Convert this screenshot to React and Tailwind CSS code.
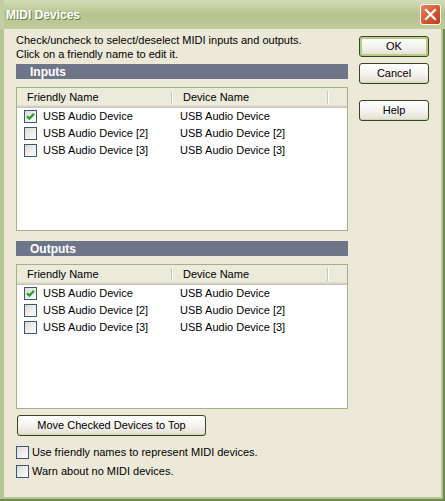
import React, { useState } from 'react';

const inputs = [
  { friendly: 'USB Audio Device', device: 'USB Audio Device', checked: true },
  { friendly: 'USB Audio Device [2]', device: 'USB Audio Device [2]', checked: false },
  { friendly: 'USB Audio Device [3]', device: 'USB Audio Device [3]', checked: false },
];

function CheckBox({ checked, onChange }) {
  return (
    <button
      onClick={onChange}
      className="w-[13px] h-[13px] shrink-0 border border-[#3c5878] bg-linear-to-br from-[#dcdad3] to-white flex items-center justify-center p-0"
    >
      {checked && (
        <svg width="9" height="9" viewBox="0 0 9 9">
          <path d="M1 4.2 L3.4 6.6 L8 1.8" fill="none" stroke="#21a121" strokeWidth="2.2" />
        </svg>
      )}
    </button>
  );
}

function XpButton({ children, isDefault, className = '' }) {
  return (
    <button
      className={`h-[21px] rounded-[3px] border border-[#36471f] bg-linear-to-b from-white via-[#f4f3ee] to-[#e3e0d2] text-[11px] text-black ${
        isDefault ? 'shadow-[inset_0_0_0_2px_#b4cc86]' : 'shadow-[inset_0_-1px_0_#d6d0bd]'
      } ${className}`}
    >
      {children}
    </button>
  );
}

function SectionBar({ label }) {
  return (
    <div className="h-[15px] bg-[#6f7588] flex items-center pl-[14px] text-[12px] font-bold text-white">
      {label}
    </div>
  );
}

function DeviceList({ rows, height }) {
  const [items, setItems] = useState(rows);
  return (
    <div className={`${height} border border-[#a4b08a] bg-white`}>
      <div className="flex items-center h-[20px] bg-[#ebeadb] shadow-[inset_0_-1px_0_#cbc7b8,inset_0_-2px_0_#d6d2c2,inset_0_-3px_0_#e2decd] pb-[2px]">
        <div className="w-[154px] pl-[10px]">Friendly Name</div>
        <div className="w-[2px] h-[13px] border-l border-[#cbc7b8] border-r border-r-white" />
        <div className="w-[154px] pl-[10px]">Device Name</div>
        <div className="w-[2px] h-[13px] border-l border-[#cbc7b8] border-r border-r-white" />
      </div>
      {items.map((r, i) => (
        <div key={i} className="flex items-center h-[17px]">
          <div className="w-[156px] flex items-center pl-[7px] gap-[6px]">
            <CheckBox
              checked={r.checked}
              onChange={() =>
                setItems(items.map((it, j) => (j === i ? { ...it, checked: !it.checked } : it)))
              }
            />
            <span>{r.friendly}</span>
          </div>
          <div className="pl-[7px]">{r.device}</div>
        </div>
      ))}
    </div>
  );
}

export default function App() {
  const [friendly, setFriendly] = useState(false);
  const [warn, setWarn] = useState(false);

  return (
    <div className="w-[445px] h-[501px] flex flex-col font-['Liberation_Sans',Arial,sans-serif] text-[11px] text-black select-none">
      {/* title bar */}
      <div className="h-[29px] shrink-0 flex items-center justify-between pl-[6px] pr-[4px] bg-linear-to-b from-[#d3dcb6] via-[#b6c38f] to-[#c0cc9d] border-l-4 border-[#c3cea5]">
        <span className="text-[12px] font-bold text-white [text-shadow:1px_1px_0_#6c7c4a] -ml-[4px]">
          MIDI Devices
        </span>
        <button className="w-[21px] h-[21px] rounded-[3px] border border-white bg-linear-to-br from-[#e8845c] via-[#d65a35] to-[#b83c1c] flex items-center justify-center">
          <svg width="13" height="13" viewBox="0 0 13 13">
            <path d="M2 2 L11 11 M11 2 L2 11" stroke="white" strokeWidth="2.2" strokeLinecap="square" />
          </svg>
        </button>
      </div>

      {/* frame */}
      <div className="flex-1 flex border-r-2 border-b-2 border-[#6d8a4a]">
        <div className="flex-1 flex bg-[#ece9d8] border-l-4 border-r-2 border-b-2 border-[#b7c497]">
          {/* left column */}
          <div className="w-[344px] pl-[12px] pt-[4px] flex flex-col">
            <p className="leading-[14px]">Check/uncheck to select/deselect MIDI inputs and outputs.</p>
            <p className="leading-[14px]">Click on a friendly name to edit it.</p>

            <div className="mt-[3px]">
              <SectionBar label="Inputs" />
            </div>
            <div className="mt-[8px]">
              <DeviceList rows={inputs} height="h-[144px]" />
            </div>

            <div className="mt-[10px]">
              <SectionBar label="Outputs" />
            </div>
            <div className="mt-[8px]">
              <DeviceList rows={inputs} height="h-[145px]" />
            </div>

            <div className="mt-[6px] ml-[1px]">
              <XpButton className="w-[189px]">Move Checked Devices to Top</XpButton>
            </div>

            <div className="mt-[10px] flex flex-col gap-[6px]">
              <label className="flex items-center gap-[3px] h-[13px]">
                <CheckBox checked={friendly} onChange={() => setFriendly(!friendly)} />
                <span>Use friendly names to represent MIDI devices.</span>
              </label>
              <label className="flex items-center gap-[3px] h-[13px]">
                <CheckBox checked={warn} onChange={() => setWarn(!warn)} />
                <span>Warn about no MIDI devices.</span>
              </label>
            </div>
          </div>

          {/* right column */}
          <div className="pl-[11px] pt-[7px] flex flex-col">
            <XpButton isDefault className="w-[70px] h-[20px]">OK</XpButton>
            <XpButton className="w-[70px] h-[20px] mt-[6px]">Cancel</XpButton>
            <XpButton className="w-[70px] h-[20px] mt-[16px]">Help</XpButton>
          </div>
        </div>
      </div>
    </div>
  );
}
